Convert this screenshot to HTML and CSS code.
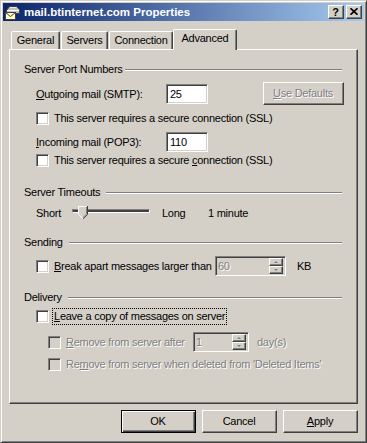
FILE: index.html
```html
<!DOCTYPE html>
<html>
<head>
<meta charset="utf-8">
<link rel="stylesheet" href="styles.css">
</head>
<body>
<div class="window">
  <div class="titlebar">
    <svg class="ticon" width="16" height="16" viewBox="0 0 16 16">
      <path d="M2.5 6.5 L5.5 2.5 H12.5 L15.5 5.5 V9.5 H2.5 Z" fill="#C0C0C0" stroke="#404040"/>
      <path d="M3 6.5 H15" stroke="#FFFFFF"/>
      <path d="M6 3.5 H12" stroke="#E8E8E8"/>
      <rect x="1.5" y="8.5" width="10" height="7" fill="#FFFFC8" stroke="#404040"/>
      <path d="M1.5 8.5 L6.5 12.5 L11.5 8.5" stroke="#404040" fill="none"/>
    </svg>
    <span class="ttext">mail.btinternet.com Properties</span>
    <div class="tbtns">
      <span class="tbtn qm">?</span>
      <span class="tbtn"><svg width="8" height="7" viewBox="0 0 8 7"><path d="M0.5 0.3 L7.5 6.7 M7.5 0.3 L0.5 6.7" stroke="#000" stroke-width="1.7"/></svg></span>
    </div>
  </div>
  <div class="body">
    <div class="tabs">
      <div class="tab w-gen">General</div>
      <div class="tab w-srv">Servers</div>
      <div class="tab w-con">Connection</div>
      <div class="tab sel w-adv">Advanced</div>
    </div>
    <div class="panel">
      <div class="hdr h1"><span>Server Port Numbers</span><span class="line tight"></span></div>
      <div class="row r-out ind">
        <span class="lbl"><u>O</u>utgoing mail (SMTP):</span>
        <span class="input">25</span>
        <span class="btn small disabled"><span><u>U</u>se Defaults</span></span>
      </div>
      <div class="row r-chk1 ind">
        <span class="cb"></span><span class="ctext">This server requires a secure connection (SSL)</span>
      </div>
      <div class="row r-in ind">
        <span class="lbl"><u>I</u>ncoming mail (POP3):</span>
        <span class="input">110</span>
      </div>
      <div class="row r-chk2 ind">
        <span class="cb"></span><span class="ctext">This server requires a secure <u>c</u>onnection (SSL)</span>
      </div>

      <div class="hdr h2"><span>Server Timeouts</span><span class="line"></span></div>
      <div class="row r-slider ind">
        <span class="sl-short">Short</span>
        <span class="slider">
          <span class="track"></span>
          <svg class="thumb" width="10" height="13" viewBox="0 0 10 13">
            <path d="M0 0 H10 V8 L5 13 L0 8 Z" fill="#D4D0C8"/>
            <path d="M0.5 8.5 V0.5 H9" stroke="#FFFFFF" fill="none"/>
            <path d="M0.5 8.3 L4.8 12.4" stroke="#FFFFFF" fill="none"/>
            <path d="M9.5 0 V8.5 L5 12.8" stroke="#404040" fill="none"/>
            <path d="M8.5 1 V8.1 L5 11.5" stroke="#808080" fill="none"/>
          </svg>
        </span>
        <span class="sl-long">Long</span>
        <span>1 minute</span>
      </div>

      <div class="hdr h3"><span>Sending</span><span class="line"></span></div>
      <div class="row r-break ind">
        <span class="cb"></span><span class="ctext lbl-break"><u>B</u>reak apart messages larger than</span>
        <span class="spin w-break"><span class="spintext">60</span><span class="spinbtns"><span class="sb"><i class="up"></i></span><span class="sb"><i class="dn"></i></span></span></span>
        <span class="unit-kb">KB</span>
      </div>

      <div class="hdr h4"><span>Delivery</span><span class="line"></span></div>
      <div class="row r-leave ind">
        <span class="cb"></span><span class="focus"><u>L</u>eave a copy of messages on server</span>
      </div>
      <div class="row r-rem1 ind2">
        <span class="cb dis"></span><span class="ctext grey lbl-rem"><u>R</u>emove from server after</span>
        <span class="spin w-rem"><span class="spintext">1</span><span class="spinbtns"><span class="sb"><i class="up"></i></span><span class="sb"><i class="dn"></i></span></span></span>
        <span class="grey unit-day">day(s)</span>
      </div>
      <div class="row r-rem2 ind2">
        <span class="cb dis"></span><span class="ctext grey">Re<u>m</u>ove from server when deleted from 'Deleted Items'</span>
      </div>
    </div>
    <div class="buttons">
      <span class="btn default">OK</span>
      <span class="btn">Cancel</span>
      <span class="btn"><span><u>A</u>pply</span></span>
    </div>
  </div>
</div>
</body>
</html>
```

FILE: styles.css
```css
* { box-sizing: border-box; }
html, body { margin: 0; padding: 0; background: #D4D0C8; }
body {
  font-family: "Liberation Sans", Arial, sans-serif;
  font-size: 11px;
  letter-spacing: -0.25px;
  color: #000;
}
u { text-decoration: underline; text-underline-offset: 1px; }

.window {
  width: 367px;
  height: 443px;
  background: #D4D0C8;
  border: 1px solid;
  border-color: #D4D0C8 #404040 #404040 #D4D0C8;
  box-shadow: inset 1px 1px #FFFFFF, inset -1px -1px #808080;
  padding: 2px;
  display: flex;
  flex-direction: column;
}

/* title bar */
.titlebar {
  height: 18px;
  flex: none;
  display: flex;
  align-items: center;
  padding: 0 2px 0 1px;
  background: linear-gradient(to right, #0A246A, #A6CAF0);
}
.ticon { flex: none; display: block; }
.ttext {
  margin-left: 4px;
  color: #FFFFFF;
  font-weight: bold;
  font-size: 11.5px;
  letter-spacing: 0;
  line-height: 18px;
  flex: 1;
  white-space: nowrap;
}
.tbtns { display: flex; gap: 2px; }
.tbtn {
  width: 16px;
  height: 14px;
  background: #D4D0C8;
  border: 1px solid;
  border-color: #FFFFFF #404040 #404040 #FFFFFF;
  box-shadow: inset -1px -1px #808080;
  display: flex;
  align-items: center;
  justify-content: center;
  padding: 0 1px 1px 0;
}
.tbtn.qm {
  font-weight: bold;
  font-size: 11px;
  line-height: 12px;
  letter-spacing: 0;
}
.tbtn svg { display: block; }

/* body */
.body {
  flex: 1;
  padding: 8px 6px 0 6px;
  display: flex;
  flex-direction: column;
}

.tabs {
  height: 20px;
  display: flex;
  align-items: flex-end;
  padding-left: 2px;
  flex: none;
}
.tab {
  height: 18px;
  border: 1px solid;
  border-bottom: none;
  border-color: #FFFFFF #404040 transparent #FFFFFF;
  box-shadow: inset -1px 0 #808080;
  border-radius: 2px 2px 0 0;
  text-align: center;
  line-height: 15px;
  padding-top: 1px;
  background: #D4D0C8;
  margin-right: 1px;
  white-space: nowrap;
}
.w-gen { width: 49px; }
.w-srv { width: 47px; }
.w-con { width: 64px; margin-right: 0; }
.w-adv { width: 64px; }
.tab.sel {
  height: 21px;
  margin-bottom: -1px;
  position: relative;
  z-index: 1;
}

.panel {
  height: 355px;
  flex: none;
  border: 1px solid;
  border-color: #FFFFFF #404040 #404040 #FFFFFF;
  box-shadow: inset -1px -1px #808080;
  padding: 0 15px 0 14px;
  display: flex;
  flex-direction: column;
}

.hdr {
  height: 13px;
  line-height: 13px;
  display: flex;
  align-items: center;
  gap: 6px;
  white-space: nowrap;
}
.line {
  flex: 1;
  height: 2px;
  border-top: 1px solid #808080;
  border-bottom: 1px solid #FFFFFF;
  margin-top: 1px;
}
.hdr .line.tight { margin-left: -4px; }
.h1 { margin-top: 13px; }
.h2 { margin-top: 19px; }
.h3 { margin-top: 15px; }
.h4 { margin-top: 15px; }

.row {
  display: flex;
  align-items: center;
  white-space: nowrap;
}
.ind { padding-left: 12px; }
.ind2 { padding-left: 24px; }

.r-out { height: 23px; margin-top: 6px; }
.r-chk1 { height: 13px; margin-top: 7px; }
.r-in { height: 20px; margin-top: 7px; }
.r-chk2 { height: 13px; margin-top: 2px; }
.r-slider { height: 16px; margin-top: 6px; }
.r-break { height: 20px; margin-top: 7px; }
.r-leave { height: 17px; margin-top: 4px; }
.r-rem1 { height: 20px; margin-top: 7px; }
.r-rem2 { height: 13px; margin-top: 6px; }

.lbl { width: 130px; flex: none; }

.input {
  width: 42px;
  height: 20px;
  flex: none;
  background: #FFFFFF;
  border: 1px solid;
  border-color: #808080 #FFFFFF #FFFFFF #808080;
  box-shadow: inset 1px 1px #404040, inset -1px -1px #D4D0C8;
  padding-left: 3px;
  line-height: 18px;
}

.cb {
  width: 13px;
  height: 13px;
  flex: none;
  background: #FFFFFF;
  border: 1px solid;
  border-color: #808080 #FFFFFF #FFFFFF #808080;
  box-shadow: inset 1px 1px #404040, inset -1px -1px #D4D0C8;
}
.cb.dis { background: #D4D0C8; }
.ctext { margin-left: 5px; line-height: 13px; }

.grey { color: #808080; text-shadow: 1px 1px 0 #FFFFFF; }

.btn {
  width: 75px;
  height: 23px;
  flex: none;
  display: flex;
  align-items: center;
  justify-content: center;
  background: #D4D0C8;
  border: 1px solid;
  border-color: #FFFFFF #404040 #404040 #FFFFFF;
  box-shadow: inset -1px -1px #808080;
  padding: 0 1px 1px 0;
}
.btn.default {
  border-color: #000000;
  box-shadow: inset 1px 1px #FFFFFF, inset -1px -1px #404040, inset -2px -2px #808080;
}
.btn.small {
  width: 81px;
  margin-left: auto;
  margin-right: -2px;
  align-self: flex-start;
}
.btn.disabled { color: #808080; text-shadow: 1px 1px 0 #FFFFFF; }

/* slider */
.sl-short { width: 36px; flex: none; }
.slider {
  position: relative;
  width: 78px;
  height: 16px;
  flex: none;
}
.track {
  position: absolute;
  left: 0;
  top: 4px;
  width: 78px;
  height: 4px;
  border: 1px solid;
  border-color: #808080 #FFFFFF #FFFFFF #808080;
  background: #404040;
}
.thumb {
  position: absolute;
  left: 6px;
  top: 1px;
  display: block;
}
.sl-long { margin-left: 12px; width: 46px; flex: none; }

/* spin */
.lbl-break { min-width: 158px; flex: none; margin-right: 3px; }
.lbl-rem { min-width: 124px; flex: none; margin-right: 3px; }
.spin {
  height: 20px;
  flex: none;
  display: flex;
  background: #D4D0C8;
  border: 1px solid;
  border-color: #808080 #FFFFFF #FFFFFF #808080;
  box-shadow: inset 1px 1px #404040, inset -1px -1px #D4D0C8;
  padding: 1px 1px 1px 1px;
}
.w-break { width: 71px; }
.w-rem { width: 56px; }
.spintext {
  flex: 1;
  padding-left: 1px;
  line-height: 16px;
  color: #808080;
  text-shadow: 1px 1px 0 #FFFFFF;
}
.spinbtns {
  width: 14px;
  display: flex;
  flex-direction: column;
  margin-right: 1px;
}
.sb {
  height: 8px;
  border: 1px solid;
  border-color: #FFFFFF #404040 #404040 #FFFFFF;
  box-shadow: inset -1px -1px #808080;
  display: flex;
  align-items: center;
  justify-content: center;
  background: #D4D0C8;
  padding-right: 1px;
}
.sb i { width: 0; height: 0; display: block; }
.sb .up { border-left: 2px solid transparent; border-right: 2px solid transparent; border-bottom: 2px solid #808080; }
.sb .dn { border-left: 2px solid transparent; border-right: 2px solid transparent; border-top: 2px solid #808080; }
.unit-kb { margin-left: 11px; }
.unit-day { margin-left: 8px; }

.focus {
  margin-left: 3px;
  border: 1px dotted #000000;
  padding: 0 1px;
  line-height: 15px;
}

.buttons {
  margin-top: 6px;
  display: flex;
  justify-content: flex-end;
  gap: 6px;
}
```
